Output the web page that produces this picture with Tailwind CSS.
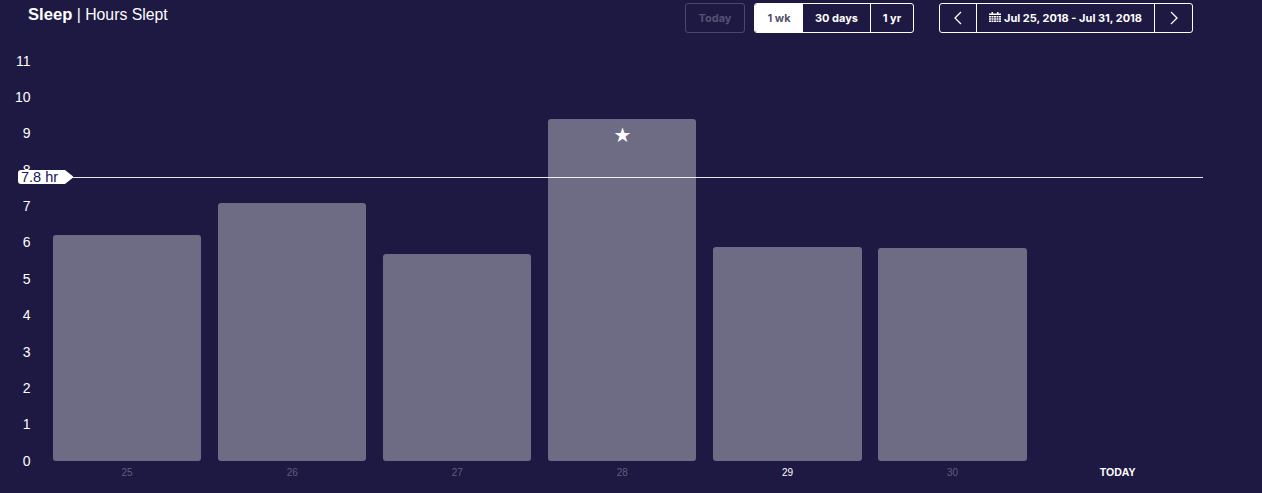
<!DOCTYPE html>
<html lang="en">
<head>
  <meta charset="UTF-8" />
  <title>Sleep – Hours Slept</title>
  <script src="https://cdn.jsdelivr.net/npm/@tailwindcss/browser@4"></script>
</head>
<body class="h-[493px] w-[1262px] overflow-hidden bg-[#1e1943] font-['Liberation_Sans',sans-serif] text-white">
  <div class="relative h-[493px]">

    <!-- Header -->
    <div class="flex h-[43px] items-start pt-[3px]">
      <h1 class="w-[685px] pl-[28px] text-[15.8px] leading-[24px]"><span class="text-[16.6px] font-bold">Sleep</span> | Hours Slept</h1>

      <button class="h-[30px] w-[60px] rounded-[3px] border border-white/20 font-['Inter',sans-serif] text-[11px] font-bold text-white/25">Today</button>

      <div class="ml-[9px] flex h-[30px] w-[160px] overflow-hidden rounded-[3px] border border-white font-['Inter',sans-serif] text-[11px] font-bold">
        <button class="w-[48px] bg-white text-[#1e1943]/80">1 wk</button>
        <button class="w-[68px] border-r border-white">30 days</button>
        <button class="flex-1">1 yr</button>
      </div>

      <div class="ml-[25px] flex h-[30px] w-[254px] overflow-hidden rounded-[3px] border border-white font-['Inter',sans-serif] text-[11px] font-bold">
        <button class="flex w-[37px] items-center justify-center border-r border-white">
          <svg class="h-[14px] w-[10px]" viewBox="0 0 10 14" fill="none" stroke="white" stroke-width="1.3"><path d="M8 1 2 7l6 6" /></svg>
        </button>
        <button class="flex w-[178px] items-center justify-center gap-[3px] border-r border-white">
          <svg class="h-[12px] w-[12px]" viewBox="0 0 12 12" fill="white">
            <path d="M2.5 0h1.5v2h-1.5zM8 0h1.5v2H8z" />
            <path d="M0 1.5h12V3H0z" />
            <path d="M0 4h2v1.500H0zM2.500 4h2v1.500h-2zM5 4h2v1.500H5zM7.500 4h2v1.500h-2zM10 4h2v1.500h-2zM0 6.200h2v1.500H0zM2.500 6.200h2v1.500h-2zM5 6.200h2v1.500H5zM7.500 6.200h2v1.500h-2zM10 6.200h2v1.500h-2zM0 8.400h2V10H0zM2.500 8.400h2V10h-2zM5 8.400h2V10H5zM7.500 8.400h2V10h-2zM10 8.400h2V10h-2z" />
          </svg>
          Jul 25, 2018 - Jul 31, 2018
        </button>
        <button class="flex flex-1 items-center justify-center">
          <svg class="h-[14px] w-[10px]" viewBox="0 0 10 14" fill="none" stroke="white" stroke-width="1.3"><path d="m2 1 6 6-6 6" /></svg>
        </button>
      </div>
    </div>

    <!-- Chart -->
    <div class="flex">
      <div class="w-[53px] text-[14px]">
        <div class="flex h-[36.36px] w-[30.5px] items-center justify-end">11</div>
        <div class="flex h-[36.36px] w-[30.5px] items-center justify-end">10</div>
        <div class="flex h-[36.36px] w-[30.5px] items-center justify-end">9</div>
        <div class="flex h-[36.36px] w-[30.5px] items-center justify-end">8</div>
        <div class="flex h-[36.36px] w-[30.5px] items-center justify-end">7</div>
        <div class="flex h-[36.36px] w-[30.5px] items-center justify-end">6</div>
        <div class="flex h-[36.36px] w-[30.5px] items-center justify-end">5</div>
        <div class="flex h-[36.36px] w-[30.5px] items-center justify-end">4</div>
        <div class="flex h-[36.36px] w-[30.5px] items-center justify-end">3</div>
        <div class="flex h-[36.36px] w-[30.5px] items-center justify-end">2</div>
        <div class="flex h-[36.36px] w-[30.5px] items-center justify-end">1</div>
        <div class="flex h-[36.36px] w-[30.5px] items-center justify-end">0</div>
      </div>

      <div>
        <div class="flex h-[418px] items-end gap-[16.92px]">
          <div class="h-[226px] w-[148.2px] rounded-[3px] bg-[#6e6b85]"></div>
          <div class="h-[258px] w-[148.2px] rounded-[3px] bg-[#6e6b85]"></div>
          <div class="h-[207px] w-[148.2px] rounded-[3px] bg-[#6e6b85]"></div>
          <div class="flex h-[342px] w-[148.2px] justify-center rounded-[3px] bg-[#6e6b85] pt-[4px] font-['DejaVu_Sans',sans-serif] text-[20px] leading-[24px]">★</div>
          <div class="h-[214px] w-[148.2px] rounded-[3px] bg-[#6e6b85]"></div>
          <div class="h-[213px] w-[148.2px] rounded-[3px] bg-[#6e6b85]"></div>
          <div class="w-[148.2px]"></div>
        </div>
        <div class="flex h-[22px] items-center gap-[16.92px] text-center text-[10px] text-white/30">
          <div class="w-[148.2px]">25</div>
          <div class="w-[148.2px]">26</div>
          <div class="w-[148.2px]">27</div>
          <div class="w-[148.2px]">28</div>
          <div class="w-[148.2px] text-white">29</div>
          <div class="w-[148.2px]">30</div>
          <div class="w-[148.2px] pt-[2px] text-[10.5px] font-bold text-white">TODAY</div>
        </div>
      </div>
    </div>

    <!-- Average line -->
    <div class="absolute left-[70px] top-[177px] h-px w-[1133px] bg-white/90"></div>
    <div class="absolute left-[18px] top-[170px] h-[14px] w-[55px]">
      <svg class="absolute inset-0" width="55" height="14" viewBox="0 0 55 14" fill="white"><path d="M3 0h44l7.500 6a1.300 1.300 0 0 1 0 2L47 14H3a3 3 0 0 1-3-3V3a3 3 0 0 1 3-3z" /></svg>
      <span class="absolute left-[3px] top-0 text-[14.5px] leading-[14px] text-[#12205a]">7.8 hr</span>
    </div>
  </div>
</body>
</html>
